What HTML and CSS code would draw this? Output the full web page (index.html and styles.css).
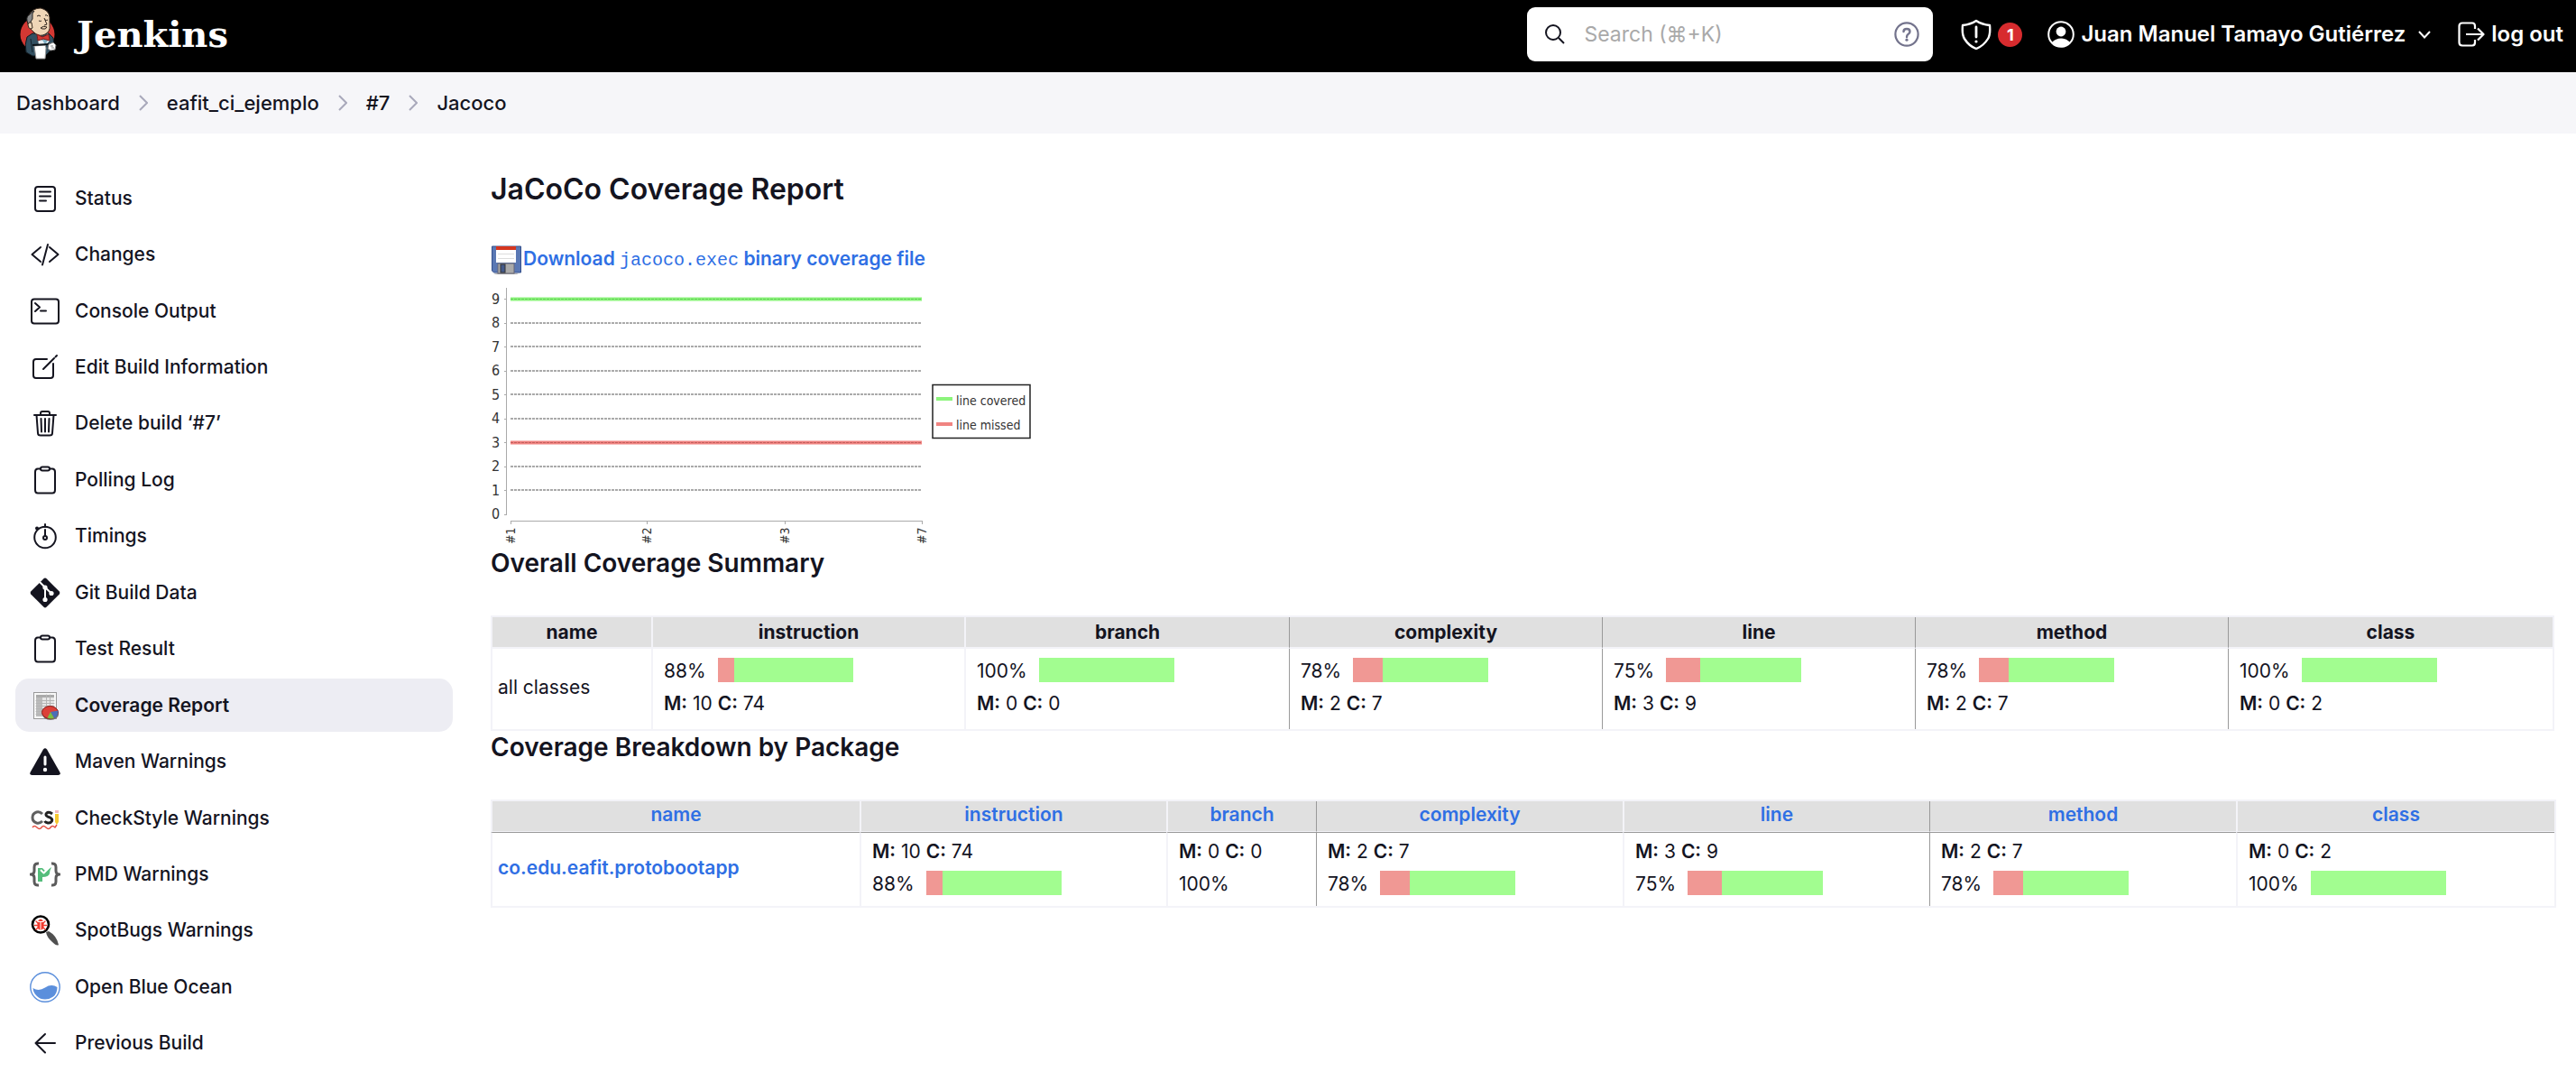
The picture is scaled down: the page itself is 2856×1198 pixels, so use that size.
FILE: index.html
```html
<!DOCTYPE html>
<html lang="en">
<head>
<meta charset="utf-8">
<meta name="viewport" content="width=device-width, initial-scale=1">
<title>JaCoCo Coverage Report - Jenkins</title>
<link rel="stylesheet" href="styles.css">
</head>
<body>
<header class="header">
  <a class="brand" href="#">
    <svg class="brand-mark" viewBox="0 0 60 70" aria-hidden="true">
      <ellipse cx="27.500" cy="35" rx="19" ry="19" fill="#d33833"/>
      <path d="M16 38 L22 34 L40 34 L45 39 L46 46 L41 54 L36 59 L22 59 L15 55 Q13 46 16 38Z" fill="#335061" stroke="#111a20"/>
      <path d="M20 40 L22 55" stroke="#14222c" fill="none"/>
      <path d="M27 35 L33 42 L39 34 L41 42 L36 48 L29 47Z" fill="#e8eef2"/>
      <path d="M32 39 L36 47 L40 40Z" fill="#81b0c4"/>
      <path d="M18 14 Q22 6 31 6 Q40 8 41 16 L41 25 Q42 32 36 35 Q30 38 25 34 Q20 30 18 26Z" fill="#f0d6b7" stroke="#3a2c22"/>
      <path d="M19 13 Q15 15 16 20 L18 27 L21 26 L20 21 L22 18 L22 12 L24 9 Q21 10 19 13Z" fill="#8b8b8b" stroke="#222" stroke-width="1"/>
      <path d="M18 22 Q16 24 18 28 Q20 30 22 28 L21 22Z" fill="#f0d6b7" stroke="#3a2c22" stroke-width="1"/>
      <path d="M27 15 Q29 13 31 15 M36 14 Q38 13 39 15 M29 20 Q31 21 32 20 M36 19 Q38 20 39 19 M35 17 L38 24 L35 25 M31 28 Q34 25 38 27 Q37 30 33 29Z" fill="none" stroke="#2b211b" stroke-width="1"/>
      <path d="M27 35 L33 38 L40 35 L41 42 L34 40 L28 42Z" fill="#d33833" stroke="#7a1a18" stroke-width="1"/>
      <path d="M24 48 L36 47 L37 50 L36 62 L26 62Z" fill="#fff" stroke="#999" stroke-width="1"/>
      <path d="M22 47 L40 46" stroke="#0d1318" stroke-width="2"/>
      <path d="M40 46 L45 44 L48 47 L47 52 L42 53 L39 51Z" fill="#fff" stroke="#777" stroke-width="1"/>
      <path d="M42 48 H45 M43 50 H46" stroke="#888" stroke-width="1"/>
    </svg>
    <span class="brand-name">Jenkins</span>
  </a>
  <form class="search" role="search">
    <svg class="search-icon" viewBox="0 0 22 24" aria-hidden="true"><circle cx="9" cy="10" r="8" fill="none" stroke="#14141f" stroke-width="2"/><path d="M15 16 L21 22" stroke="#14141f" stroke-width="2"/></svg>
    <input class="search-input" type="search" aria-label="Search" placeholder="Search (⌘+K)">
    <a class="search-help" href="#" aria-label="Help">
      <svg viewBox="0 0 28 28" aria-hidden="true"><circle cx="14" cy="14" r="12.600" fill="none" stroke="#73738c" stroke-width="2.200"/><path d="M10.500 11 Q10.500 8 14 8 Q17.500 8 17.500 11 Q17.500 13 15.500 14 Q14 15 14 17" fill="none" stroke="#73738c" stroke-width="2.400" stroke-linecap="round"/><circle cx="14" cy="20.200" r="1.600" fill="#73738c"/></svg>
    </a>
  </form>
  <a class="monitor" href="#" aria-label="Security warnings">
    <svg class="monitor-icon" viewBox="0 0 34 34" fill="none" stroke="#fff" aria-hidden="true"><path d="M17 2 Q23 6 32 7 Q33 17 30 22 Q25 30 17 33 Q9 30 4 22 Q1 17 2 7 Q11 6 17 2Z" stroke-width="2.400" stroke-linejoin="round"/><path d="M17 9 V20" stroke-width="2.800" stroke-linecap="round"/><circle cx="17" cy="25" r="1.600" fill="#fff" stroke="none"/></svg>
    <span class="badge">1</span>
  </a>
  <a class="user" href="#">
    <svg class="user-icon" viewBox="0 0 30 30" aria-hidden="true"><circle cx="15" cy="15" r="13.800" fill="none" stroke="#fff" stroke-width="2"/><circle cx="15" cy="12" r="5.400" fill="#fff"/><path d="M5 24 Q9 19.500 15 19.500 Q21 19.500 25 24 Q21 28.500 15 28.500 Q9 28.500 5 24Z" fill="#fff"/></svg>
    <span>Juan Manuel Tamayo Gutiérrez</span>
  </a>
  <button class="user-menu" type="button" aria-label="User menu"><svg viewBox="0 0 14 9" aria-hidden="true"><path d="M1 1 L7 7.500 L13 1" fill="none" stroke="#fff" stroke-width="2"/></svg></button>
  <a class="logout" href="#">
    <svg class="logout-icon" viewBox="0 0 30 28" fill="none" stroke="#fff" stroke-width="2.200" aria-hidden="true"><path d="M19 8 V5 Q19 1.500 16 1.500 H5 Q1.500 1.500 1.500 5 V23 Q1.500 26.500 5 26.500 H16 Q19 26.500 19 23 V20 M9 14 H28 M22 7.500 L28.500 14 L22 20.500" stroke-linejoin="round"/></svg>
    <span>log out</span>
  </a>
</header>

<nav class="crumbs" aria-label="Breadcrumb">
  <a href="#">Dashboard</a>
  <svg viewBox="0 0 10 18" aria-hidden="true"><path d="M1 1 L9 9 L1 17"/></svg>
  <a href="#">eafit_ci_ejemplo</a>
  <svg viewBox="0 0 10 18" aria-hidden="true"><path d="M1 1 L9 9 L1 17"/></svg>
  <a href="#">#7</a>
  <svg viewBox="0 0 10 18" aria-hidden="true"><path d="M1 1 L9 9 L1 17"/></svg>
  <a href="#">Jacoco</a>
</nav>

<div class="page">
  <nav class="tasks" aria-label="Build">
    <a class="task" href="#">
      <svg viewBox="0 0 34 34" aria-hidden="true"><rect x="6" y="4" width="22" height="27" rx="3"/><path d="M11 9.500 H23 M11 14.500 H23 M11 19.500 H18"/></svg>Status</a>
    <a class="task" href="#">
      <svg viewBox="0 0 34 34" aria-hidden="true"><path d="M12 9 L2.500 17 L12 25 M22 9 L31.500 17 L22 25 M20 6 L14 28.500"/></svg>Changes</a>
    <a class="task" href="#">
      <svg viewBox="0 0 34 34" aria-hidden="true"><rect x="2" y="3.500" width="30" height="27" rx="3"/><path d="M6 8 L11 12.500 L6 17 M12 16.500 H18"/></svg>Console Output</a>
    <a class="task" href="#">
      <svg viewBox="0 0 34 34" aria-hidden="true"><path d="M19 8 H7 Q4 8 4 11 V26 Q4 29 7 29 H23 Q26 29 26 26 V13 M15 19 L27 7 M28.500 5.500 L30 4"/></svg>Edit Build Information</a>
    <a class="task" href="#">
      <svg viewBox="0 0 34 34" aria-hidden="true"><path d="M5 8 H29 M12 8 V6 Q12 4 14 4 H20 Q22 4 22 6 V8 M7.500 8 L9 28 Q9 30.500 12 30.500 H22 Q25 30.500 25 28 L26.500 8 M12.500 12 L13 26.500 M17 12 V26.500 M21.500 12 L21 26.500"/></svg>Delete build ‘#7’</a>
    <a class="task" href="#">
      <svg viewBox="0 0 34 34" aria-hidden="true"><path d="M12 4.500 H9 Q6 4.500 6 8 V28 Q6 31.500 9 31.500 H25 Q28 31.500 28 28 V8 Q28 4.500 25 4.500 H22"/><rect x="12" y="2.500" width="10" height="4" rx="2"/></svg>Polling Log</a>
    <a class="task" href="#">
      <svg viewBox="0 0 34 34" aria-hidden="true"><circle cx="17" cy="18.500" r="11.800"/><circle cx="17" cy="19" r="2"/><path d="M17 17 V10 M17 4 V7"/><circle class="solid" cx="8" cy="8.500" r="2"/></svg>Timings</a>
    <a class="task" href="#">
      <svg viewBox="0 0 34 34" aria-hidden="true"><path class="solid" d="M15.500 1.200 Q17 0 18.500 1.200 L32.800 15.500 Q34 17 32.800 18.500 L18.500 32.800 Q17 34 15.500 32.800 L1.200 18.500 Q0 17 1.200 15.500Z"/><path stroke="#fff" d="M10 4 L17 11 V24 M17 11 L24 17.500"/><g fill="#fff" stroke="none"><circle cx="17" cy="11" r="2.600"/><circle cx="17" cy="24.500" r="2.600"/><circle cx="24" cy="17.500" r="2.600"/></g></svg>Git Build Data</a>
    <a class="task" href="#">
      <svg viewBox="0 0 34 34" aria-hidden="true"><path d="M12 4.500 H9 Q6 4.500 6 8 V28 Q6 31.500 9 31.500 H25 Q28 31.500 28 28 V8 Q28 4.500 25 4.500 H22"/><rect x="12" y="2.500" width="10" height="4" rx="2"/></svg>Test Result</a>
    <a class="task task-active" href="#" aria-current="page">
      <svg viewBox="0 0 34 34" aria-hidden="true"><g stroke="none"><rect x="4" y="2" width="26" height="30" fill="#999"/><rect x="5" y="3" width="24" height="28" fill="#f8f8f8"/><rect x="7" y="5" width="20" height="24" fill="#e6e6e6"/><rect x="7" y="5" width="7" height="24" fill="#bbb"/><rect x="7" y="5" width="20" height="3" fill="#aaa"/></g><path stroke="#b4b4b4" stroke-width="1" d="M7 11.500 H27 M7 14.500 H27 M7 17.500 H27 M7 20.500 H27 M7 23.500 H27 M7 26.500 H27 M18.500 5 V29 M22.500 5 V29"/><ellipse cx="23" cy="27" rx="9" ry="6" fill="#777" stroke="none"/><ellipse cx="22.500" cy="24.500" rx="9" ry="7" fill="#dc4038" stroke="#8a1c18" stroke-width="1"/><path d="M23 24 L31.500 22.500 Q32 29 27 31Z" fill="#4a6fb8" stroke="none"/><path d="M23 24 L27 31 Q23 32 19.500 30.500Z" fill="#79c043" stroke="none"/></svg>Coverage Report</a>
    <a class="task" href="#">
      <svg viewBox="0 0 34 34" aria-hidden="true"><path class="solid" d="M15 3.500 Q17 1 19 3.500 L33.500 29 Q34.500 32 31.500 32 H2.500 Q-0.500 32 0.500 29Z"/><path d="M17 12 V20" stroke="#fff" stroke-width="3" stroke-linecap="round"/><circle cx="17" cy="26" r="2.200" fill="#fff" stroke="none"/></svg>Maven Warnings</a>
    <a class="task" href="#">
      <svg class="butt" viewBox="0 0 34 34" aria-hidden="true"><path d="M14 12 Q11 9 7.500 10 Q3 11.500 3 16 Q3 20.500 7.500 22 Q11 23 14 20" stroke="#606060" stroke-width="3"/><path d="M25 12 Q22 9.500 19.500 10.500 Q17 12 18.500 14 Q20 15.500 22.500 16 Q25.500 17.500 24.500 20 Q23 22.500 20 22 Q17.500 21.500 16.500 20" stroke="#222" stroke-width="3"/><path d="M28 8 H32 V11 H28Z" fill="#efb8bb" stroke="none"/><path d="M28 12 H32 V21 L30 24 L28 21Z" fill="#f6c82f" stroke="none"/><path d="M3 27 Q5 24 8 27 T13 27 T18 27 T23 27 T28 27 L30 24" stroke="#e34d40" stroke-width="1.400"/></svg>CheckStyle Warnings</a>
    <a class="task" href="#">
      <svg class="butt" viewBox="0 0 34 34" aria-hidden="true"><path d="M10 5 Q5 4.500 5 9 V13 Q5 17 1 17 Q5 17 5 21 V25 Q5 29.500 10 29 M24 5 Q29 4.500 29 9 V13 Q29 17 33 17 Q29 17 29 21 V25 Q29 29.500 24 29" stroke="#5b5b5b" stroke-width="3"/><path d="M9 10 H14 L17 13 L24 9 Q22 13 22 16 Q21 20 14 20 V25 H9Z" fill="#54bd7b" stroke="none"/><path d="M12 12 L15.500 15.500 L23 8" stroke="#fff"/></svg>PMD Warnings</a>
    <a class="task" href="#">
      <svg viewBox="0 0 34 34" aria-hidden="true"><path d="M18 19 L21 18 Q30 23 32 33 Q30 35 25 30 Q19 25 18 19Z" fill="#505050" stroke="none"/><circle cx="12" cy="10.500" r="9" fill="#fff" stroke="#000" stroke-width="2.600"/><path d="M7 7 L9 9 M17 7 L15 9 M5.500 11.500 H18.500 M7 16 L9 14 M17 16 L15 14" stroke="#f03a2e" stroke-width="1.400"/><path d="M9 7 Q12 2 15 7Z M8.500 8 H15.500 V13 Q15 16.500 12 16.500 Q9 16.500 8.500 13Z" fill="#f03a2e" stroke="none"/><path d="M12 8 V16" stroke="#fff" stroke-width="1"/></svg>SpotBugs Warnings</a>
    <a class="task" href="#">
      <svg viewBox="0 0 34 34" aria-hidden="true"><circle cx="17" cy="17" r="16.200" stroke="#5b8fdc" stroke-width="1.400"/><path d="M3.500 18 Q10 22 17 17.500 Q24 13 30.500 17 Q30.500 24 26 27.500 Q22 30.500 17 30.500 Q11.500 30.500 8 27 Q4 23.500 3.500 18Z" fill="#5b8fdc" stroke="none"/></svg>Open Blue Ocean</a>
    <a class="task" href="#">
      <svg viewBox="0 0 34 34" aria-hidden="true"><path d="M28 17 H6.500 M17 7 L6.500 17 L17 27.500"/></svg>Previous Build</a>
  </nav>

  <main class="main">
    <h1>JaCoCo Coverage Report</h1>
    <a class="download" href="#">
      <svg class="disk" viewBox="0 0 34 32" aria-hidden="true"><path d="M3 31 H31 L29 32 H6Z" fill="#aaa"/><path d="M1.500 1 H33.500 V30 H3.500 L1.500 28Z" fill="#5a78b4" stroke="#35508c"/><rect x="6" y="1" width="22" height="18" fill="#fff"/><rect x="6" y="1" width="22" height="4" fill="#d5361f"/><path d="M8 9.500 H26 M8 14.500 H26" stroke="#ddd"/><rect x="8" y="20" width="18" height="11" fill="#aaa" stroke="#667"/><rect x="11" y="21" width="5" height="9" fill="#44598a" stroke="#333"/></svg>
      <span>Download <code>jacoco.exec</code> binary coverage file</span>
    </a>
    <svg class="chart" viewBox="0 0 600 302" role="img" aria-label="Line coverage trend">
      <g class="axis"><path d="M17.500 15 V267 M22 273.500 H478.500"/><path d="M22.500 273 V277 M173.500 273 V277 M326.500 273 V277 M478.500 273 V277 M15 27.500 H17 M15 54.500 H17 M15 80.500 H17 M15 107.500 H17 M15 133.500 H17 M15 160.500 H17 M15 186.500 H17 M15 213.500 H17 M15 239.500 H17 M15 266.500 H17"/></g>
      <path class="grid" d="M22 54 H478 M22 80 H478 M22 107 H478 M22 133 H478 M22 160 H478 M22 213 H478 M22 239 H478"/>
      <path class="covered" d="M22 27.500 H478"/><path class="covered-dots" d="M22 27.500 H478"/>
      <path class="missed" d="M22 186.500 H478"/><path class="missed-dots" d="M22 186.500 H478"/>
      <g class="ticks">
        <text x="1" y="33">9</text><text x="1" y="59">8</text><text x="1" y="86">7</text><text x="1" y="112">6</text><text x="1" y="139">5</text><text x="1" y="165">4</text><text x="1" y="192">3</text><text x="1" y="218">2</text><text x="1" y="245">1</text><text x="1" y="271">0</text>
      </g>
      <g class="builds">
        <text transform="translate(27 299) rotate(-90)">#1</text><text transform="translate(178 299) rotate(-90)">#2</text><text transform="translate(331 299) rotate(-90)">#3</text><text transform="translate(483 299) rotate(-90)">#7</text>
      </g>
      <rect x="490" y="122.500" width="108" height="59" fill="#fff" stroke="#222" stroke-width="1.500"/>
      <path class="covered" d="M494 138 H512"/><path class="missed" d="M494 166 H512"/>
      <g class="legend"><text x="516" y="145">line covered</text><text x="516" y="172">line missed</text></g>
    </svg>

    <h2>Overall Coverage Summary</h2>
    <table class="report summary">
      <colgroup><col class="w178"><col class="w347"><col class="w360"><col class="w347"><col class="w347"><col class="w347"><col class="w360"></colgroup>
      <thead><tr><th scope="col">name</th><th scope="col">instruction</th><th scope="col">branch</th><th scope="col" class="rule">complexity</th><th scope="col" class="rule">line</th><th scope="col" class="rule">method</th><th scope="col" class="rule">class</th></tr></thead>
      <tbody><tr>
        <td class="name">all classes</td>
        <td><div class="pct">88%<span class="bar"><i style="width:12%"></i></span></div><div class="counts"><b>M:</b> 10 <b>C:</b> 74</div></td>
        <td><div class="pct">100%<span class="bar"></span></div><div class="counts"><b>M:</b> 0 <b>C:</b> 0</div></td>
        <td class="rule"><div class="pct">78%<span class="bar"><i style="width:22%"></i></span></div><div class="counts"><b>M:</b> 2 <b>C:</b> 7</div></td>
        <td class="rule"><div class="pct">75%<span class="bar"><i style="width:25%"></i></span></div><div class="counts"><b>M:</b> 3 <b>C:</b> 9</div></td>
        <td class="rule"><div class="pct">78%<span class="bar"><i style="width:22%"></i></span></div><div class="counts"><b>M:</b> 2 <b>C:</b> 7</div></td>
        <td class="rule"><div class="pct">100%<span class="bar"></span></div><div class="counts"><b>M:</b> 0 <b>C:</b> 2</div></td>
      </tr></tbody>
    </table>

    <h2>Coverage Breakdown by Package</h2>
    <table class="report packages">
      <colgroup><col class="w409"><col class="w340"><col class="w166"><col class="w340"><col class="w340"><col class="w340"><col class="w353"></colgroup>
      <thead><tr><th scope="col"><a href="#">name</a></th><th scope="col"><a href="#">instruction</a></th><th scope="col"><a href="#">branch</a></th><th scope="col" class="rule"><a href="#">complexity</a></th><th scope="col"><a href="#">line</a></th><th scope="col" class="rule"><a href="#">method</a></th><th scope="col"><a href="#">class</a></th></tr></thead>
      <tbody><tr>
        <td class="name"><a href="#">co.edu.eafit.protobootapp</a></td>
        <td><div class="counts"><b>M:</b> 10 <b>C:</b> 74</div><div class="pct">88%<span class="bar"><i style="width:12%"></i></span></div></td>
        <td><div class="counts"><b>M:</b> 0 <b>C:</b> 0</div><div class="pct">100%</div></td>
        <td class="rule"><div class="counts"><b>M:</b> 2 <b>C:</b> 7</div><div class="pct">78%<span class="bar"><i style="width:22%"></i></span></div></td>
        <td><div class="counts"><b>M:</b> 3 <b>C:</b> 9</div><div class="pct">75%<span class="bar"><i style="width:25%"></i></span></div></td>
        <td class="rule"><div class="counts"><b>M:</b> 2 <b>C:</b> 7</div><div class="pct">78%<span class="bar"><i style="width:22%"></i></span></div></td>
        <td><div class="counts"><b>M:</b> 0 <b>C:</b> 2</div><div class="pct">100%<span class="bar"></span></div></td>
      </tr></tbody>
    </table>
  </main>
</div>
</body>
</html>
```
FILE: styles.css
```css
:root {
  --ink: #14141f;
  --link: #2f6fe4;
  --line: #f3f3f8;
  --rule: #999;
}
* { box-sizing: border-box; }
body {
  margin: 0;
  background: #fff;
  color: var(--ink);
  font: 400 21px/30px Inter, "Open Sans", sans-serif;
}
a { color: inherit; text-decoration: none; }
svg { display: block; flex: none; }

/* Header */
.header {
  display: flex;
  align-items: center;
  min-height: 80px;
  padding: 0 14px 4px;
  background: #000;
  color: #fff;
  font-size: 24px;
  font-weight: 600;
}
.brand { display: flex; align-items: center; gap: 11px; margin-right: auto; }
.brand-mark { width: 60px; height: 70px; }
.brand-name { font: 700 40px/48px "DejaVu Serif", serif; }
.search {
  display: flex;
  align-items: center;
  width: 450px;
  height: 60px;
  padding: 0 15px 0 20px;
  border-radius: 9px;
  background: #fff;
}
.search-icon { width: 22px; height: 24px; }
.search-input {
  flex: 1;
  min-width: 0;
  padding: 0 0 0 21px;
  border: 0;
  outline: 0;
  background: none;
  color: var(--ink);
  font: 400 23px/30px Inter, sans-serif;
}
.search-input::placeholder { color: #a9a9a9; opacity: 1; }
.search-help svg { width: 28px; height: 28px; }
.monitor { display: flex; align-items: center; gap: 7px; margin-left: 31px; }
.monitor-icon { width: 34px; height: 34px; }
.badge {
  width: 27px;
  height: 27px;
  border-radius: 50%;
  background: #d72b2e;
  font-size: 18px;
  font-weight: 700;
  line-height: 27px;
  text-align: center;
}
.user { display: flex; align-items: center; gap: 7px; margin-left: 28px; }
.user-icon { width: 30px; height: 30px; }
.user-menu { margin-left: 14px; padding: 0; border: 0; background: none; }
.user-menu svg { width: 14px; height: 9px; }
.logout { display: flex; align-items: center; gap: 7px; margin-left: 30px; }
.logout-icon { width: 30px; height: 28px; }

/* Breadcrumbs */
.crumbs {
  display: flex;
  align-items: center;
  gap: 21px;
  min-height: 68px;
  padding: 0 18px;
  background: #f6f6f9;
  font-size: 22px;
  font-weight: 500;
}
.crumbs svg { width: 10px; height: 18px; fill: none; stroke: #a9a9bb; stroke-width: 2; }

/* Page */
.page {
  display: flex;
  gap: 42px;
  min-height: calc(100vh - 148px);
  padding: 0 28px 0 17px;
}
.tasks {
  display: flex;
  flex: none;
  flex-direction: column;
  gap: 3px;
  width: 485px;
  padding: 42px 0 12px;
}
.task {
  display: flex;
  flex: 1;
  align-items: center;
  gap: 16px;
  padding: 0 16px;
  border-radius: 15px;
  font-weight: 500;
}
.task svg { width: 34px; height: 34px; fill: none; stroke: var(--ink); stroke-width: 2; stroke-linejoin: round; stroke-linecap: round; }
.task .butt { stroke-linecap: butt; }
.task .solid { fill: var(--ink); stroke: none; }
.task-active { background: #ededf3; font-weight: 600; }

.main { flex: 1; min-width: 0; padding-top: 42px; }
h1, h2 { margin: 0; font-weight: 600; }
h1 { margin-bottom: 42px; font-size: 32px; line-height: 40px; }
h2 { margin-bottom: 40px; font-size: 28px; line-height: 36px; }
.download {
  display: inline-flex;
  align-items: center;
  gap: 2px;
  color: var(--link);
  font-weight: 600;
  vertical-align: top;
}
.download .disk { width: 34px; height: 32px; }
.download code { font: 400 20px/30px "Liberation Mono", monospace; }

/* Trend chart */
.chart { width: 600px; height: 302px; }
.chart path { fill: none; }
.axis { stroke: #aaa; stroke-width: 1; }
.grid { stroke: #aaa; stroke-width: 2; stroke-dasharray: 3 1; }
.covered { stroke: #8cf47c; stroke-width: 4; }
.missed { stroke: #f08481; stroke-width: 4; }
.covered-dots { stroke: #62cf57; stroke-width: 1; stroke-dasharray: 3 1; }
.missed-dots { stroke: #c4605e; stroke-width: 1; stroke-dasharray: 3 1; }
.ticks, .builds, .legend { fill: #333; font: 14px "DejaVu Sans Condensed", "DejaVu Sans", sans-serif; }
.ticks { font-size: 16px; }

/* Coverage tables */
.report {
  width: 100%;
  border: solid var(--line);
  border-width: 2px 2px 2px 0;
  border-collapse: separate;
  border-spacing: 0;
  table-layout: fixed;
}
.w166 { width: 166px; }
.w178 { width: 178px; }
.w340 { width: 340px; }
.w347 { width: 347px; }
.w353 { width: 353px; }
.w360 { width: 360px; }
.w409 { width: 409px; }
.report th {
  padding: 1px 0 0;
  border-left: 2px solid var(--line);
  background: #e0e0e0;
  font-weight: 700;
  line-height: 32px;
}
.report td { padding: 10px 12px 13px; border-left: 2px solid var(--line); }
.summary th { border-bottom: 2px solid var(--line); }
.packages th { padding: 0 0 3px; border-bottom: 1px solid var(--line); line-height: 30px; }
.packages td { padding: 6px 12px 9px; border-top: 1px solid var(--rule); }
.report .rule { border-left: 1px solid var(--rule); }
.report .name { padding-left: 6px; }
.report a { color: var(--link); font-weight: 600; }
.report b { font-weight: 600; }
.pct { display: flex; align-items: flex-start; gap: 13px; }
.pct + .counts, .counts + .pct { margin-top: 6px; }
.bar { width: 150px; height: 27px; background: #a2fd90; }
.bar i { display: block; height: 100%; background: #f09894; }
```
